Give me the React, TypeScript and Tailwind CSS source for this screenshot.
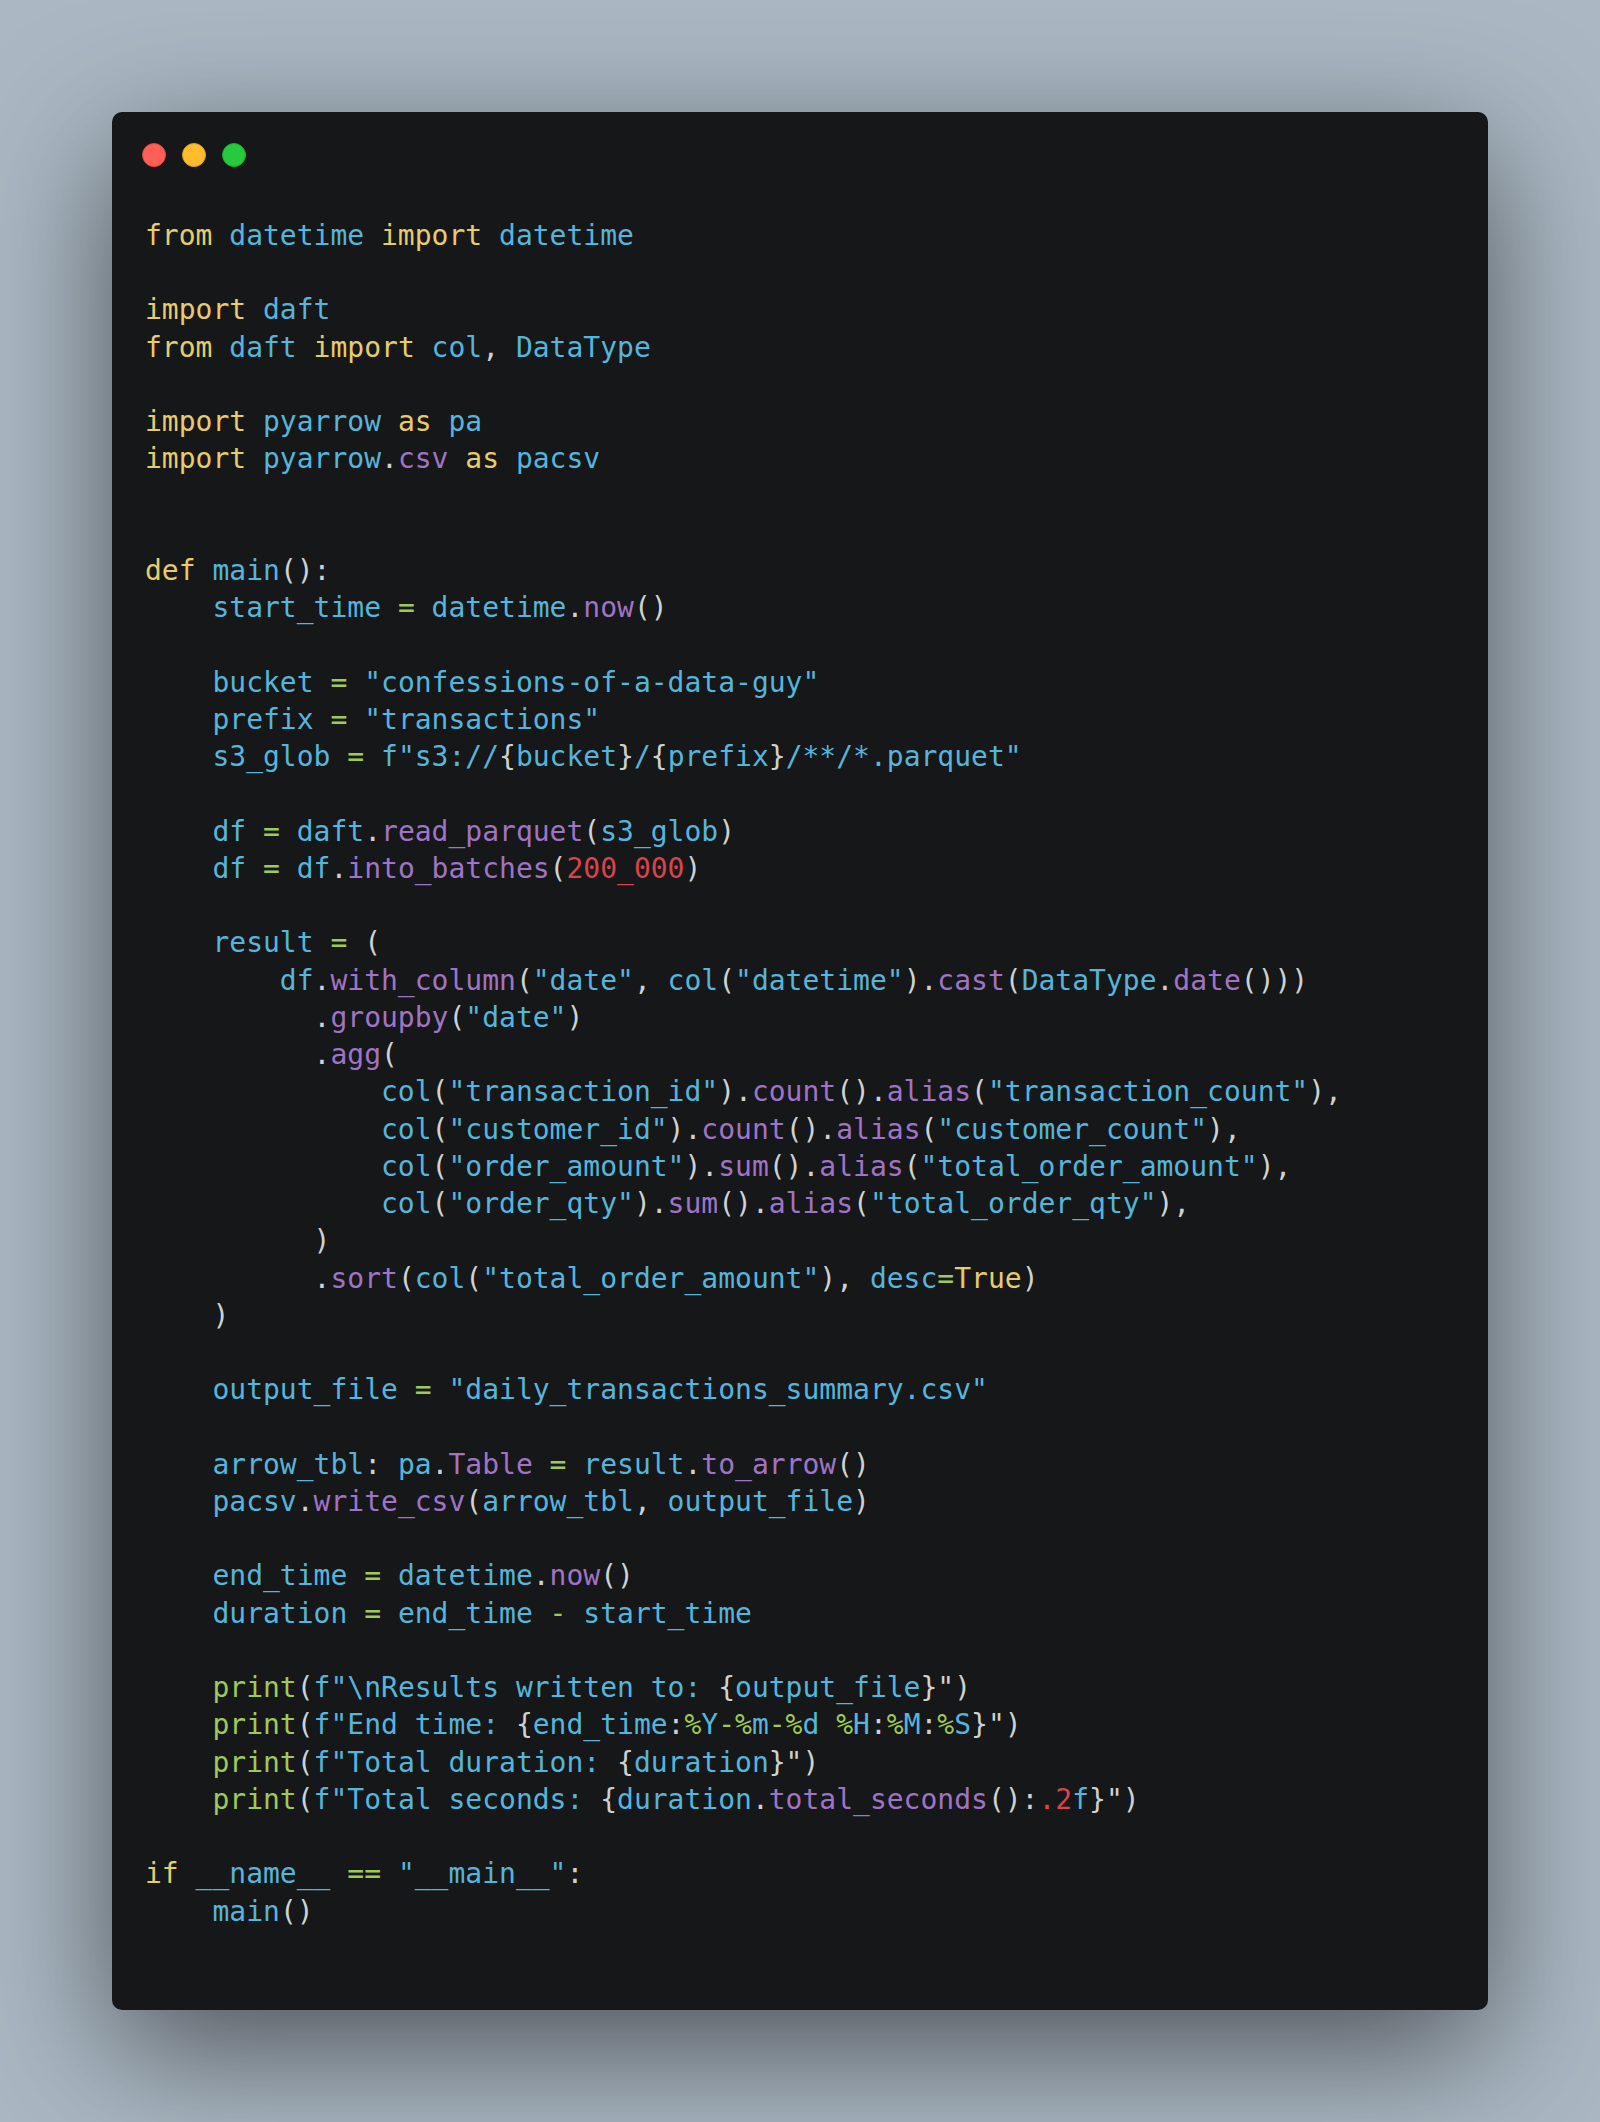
const C = {
  k: 'text-[#e6cd69]',
  v: 'text-[#55b5db]',
  p: 'text-[#a074c4]',
  o: 'text-[#9fca56]',
  n: 'text-[#d9434d]',
  t: 'text-[#cfd2d1]',
};

type Tok = [keyof typeof C, string];

// one entry per source line, blank lines are empty arrays
const lines: Tok[][] = [
  [['k', 'from'], ['t', ' '], ['v', 'datetime'], ['t', ' '], ['k', 'import'], ['t', ' '], ['v', 'datetime']],
  [],
  [['k', 'import'], ['t', ' '], ['v', 'daft']],
  [['k', 'from'], ['t', ' '], ['v', 'daft'], ['t', ' '], ['k', 'import'], ['t', ' '], ['v', 'col'], ['t', ', '], ['v', 'DataType']],
  [],
  [['k', 'import'], ['t', ' '], ['v', 'pyarrow'], ['t', ' '], ['k', 'as'], ['t', ' '], ['v', 'pa']],
  [['k', 'import'], ['t', ' '], ['v', 'pyarrow'], ['t', '.'], ['p', 'csv'], ['t', ' '], ['k', 'as'], ['t', ' '], ['v', 'pacsv']],
  [],
  [],
  [['k', 'def'], ['t', ' '], ['v', 'main'], ['t', '():']],
  [['t', '    '], ['v', 'start_time'], ['t', ' '], ['o', '='], ['t', ' '], ['v', 'datetime'], ['t', '.'], ['p', 'now'], ['t', '()']],
  [],
  [['t', '    '], ['v', 'bucket'], ['t', ' '], ['o', '='], ['t', ' '], ['v', '"confessions-of-a-data-guy"']],
  [['t', '    '], ['v', 'prefix'], ['t', ' '], ['o', '='], ['t', ' '], ['v', '"transactions"']],
  [
    ['t', '    '], ['v', 's3_glob'], ['t', ' '], ['o', '='], ['t', ' '], ['v', 'f"s3://'], ['t', '{'], ['v', 'bucket'], ['t', '}'],
    ['v', '/'], ['t', '{'], ['v', 'prefix'], ['t', '}'], ['v', '/**/*.parquet"'],
  ],
  [],
  [['t', '    '], ['v', 'df'], ['t', ' '], ['o', '='], ['t', ' '], ['v', 'daft'], ['t', '.'], ['p', 'read_parquet'], ['t', '('], ['v', 's3_glob'], ['t', ')']],
  [['t', '    '], ['v', 'df'], ['t', ' '], ['o', '='], ['t', ' '], ['v', 'df'], ['t', '.'], ['p', 'into_batches'], ['t', '('], ['n', '200_000'], ['t', ')']],
  [],
  [['t', '    '], ['v', 'result'], ['t', ' '], ['o', '='], ['t', ' (']],
  [
    ['t', '        '], ['v', 'df'], ['t', '.'], ['p', 'with_column'], ['t', '('], ['v', '"date"'], ['t', ', '], ['v', 'col'], ['t', '('],
    ['v', '"datetime"'], ['t', ').'], ['p', 'cast'], ['t', '('], ['v', 'DataType'], ['t', '.'], ['p', 'date'], ['t', '()))'],
  ],
  [['t', '          .'], ['p', 'groupby'], ['t', '('], ['v', '"date"'], ['t', ')']],
  [['t', '          .'], ['p', 'agg'], ['t', '(']],
  [['t', '              '], ['v', 'col'], ['t', '('], ['v', '"transaction_id"'], ['t', ').'], ['p', 'count'], ['t', '().'], ['p', 'alias'], ['t', '('], ['v', '"transaction_count"'], ['t', '),']],
  [['t', '              '], ['v', 'col'], ['t', '('], ['v', '"customer_id"'], ['t', ').'], ['p', 'count'], ['t', '().'], ['p', 'alias'], ['t', '('], ['v', '"customer_count"'], ['t', '),']],
  [['t', '              '], ['v', 'col'], ['t', '('], ['v', '"order_amount"'], ['t', ').'], ['p', 'sum'], ['t', '().'], ['p', 'alias'], ['t', '('], ['v', '"total_order_amount"'], ['t', '),']],
  [['t', '              '], ['v', 'col'], ['t', '('], ['v', '"order_qty"'], ['t', ').'], ['p', 'sum'], ['t', '().'], ['p', 'alias'], ['t', '('], ['v', '"total_order_qty"'], ['t', '),']],
  [['t', '          )']],
  [['t', '          .'], ['p', 'sort'], ['t', '('], ['v', 'col'], ['t', '('], ['v', '"total_order_amount"'], ['t', '), '], ['v', 'desc'], ['o', '='], ['k', 'True'], ['t', ')']],
  [['t', '    )']],
  [],
  [['t', '    '], ['v', 'output_file'], ['t', ' '], ['o', '='], ['t', ' '], ['v', '"daily_transactions_summary.csv"']],
  [],
  [
    ['t', '    '], ['v', 'arrow_tbl'], ['t', ': '], ['v', 'pa'], ['t', '.'], ['p', 'Table'], ['t', ' '], ['o', '='], ['t', ' '],
    ['v', 'result'], ['t', '.'], ['p', 'to_arrow'], ['t', '()'],
  ],
  [['t', '    '], ['v', 'pacsv'], ['t', '.'], ['p', 'write_csv'], ['t', '('], ['v', 'arrow_tbl'], ['t', ', '], ['v', 'output_file'], ['t', ')']],
  [],
  [['t', '    '], ['v', 'end_time'], ['t', ' '], ['o', '='], ['t', ' '], ['v', 'datetime'], ['t', '.'], ['p', 'now'], ['t', '()']],
  [['t', '    '], ['v', 'duration'], ['t', ' '], ['o', '='], ['t', ' '], ['v', 'end_time'], ['t', ' '], ['o', '-'], ['t', ' '], ['v', 'start_time']],
  [],
  [['t', '    '], ['o', 'print'], ['t', '('], ['v', 'f"\\nResults written to: '], ['t', '{'], ['v', 'output_file'], ['t', '}")']],
  [
    ['t', '    '], ['o', 'print'], ['t', '('], ['v', 'f"End time: '], ['t', '{'], ['v', 'end_time'], ['t', ':'],
    ['o', '%'], ['v', 'Y'], ['o', '-%'], ['v', 'm'], ['o', '-%'], ['v', 'd'], ['t', ' '], ['o', '%'], ['v', 'H'], ['t', ':'],
    ['o', '%'], ['v', 'M'], ['t', ':'], ['o', '%'], ['v', 'S'], ['t', '}")'],
  ],
  [['t', '    '], ['o', 'print'], ['t', '('], ['v', 'f"Total duration: '], ['t', '{'], ['v', 'duration'], ['t', '}")']],
  [
    ['t', '    '], ['o', 'print'], ['t', '('], ['v', 'f"Total seconds: '], ['t', '{'], ['v', 'duration'], ['t', '.'], ['p', 'total_seconds'],
    ['t', '():'], ['n', '.2'], ['v', 'f'], ['t', '}")'],
  ],
  [],
  [['k', 'if'], ['t', ' '], ['v', '__name__'], ['t', ' '], ['o', '=='], ['t', ' '], ['v', '"__main__"'], ['t', ':']],
  [['t', '    '], ['v', 'main'], ['t', '()']],
];

function Dot({ color }: { color: string }) {
  return <span className={`block w-6 h-6 rounded-full ${color}`} />;
}

export default function App() {
  return (
    <div className="min-h-[2122px] bg-[#abb8c3] px-[112px] py-[112px]">
      <div className="rounded-[10px] bg-[#151718] shadow-[0_40px_136px_rgba(0,0,0,0.55)] overflow-hidden">
        {/* window controls */}
        <div className="flex gap-4 pt-[31px] pl-[30px]">
          <Dot color="bg-[#ff5f56] border border-[#e0443e]" />
          <Dot color="bg-[#ffbd2e] border border-[#dea123]" />
          <Dot color="bg-[#27c93f] border border-[#1aab29]" />
        </div>

        <pre className="pt-[50px] pb-[80px] pl-[33px] font-['DejaVu_Sans_Mono',monospace] text-[28px] leading-[37.24px] text-[#cfd2d1]">
          {lines.map((line, i) => (
            <div key={i} className="h-[37.24px] whitespace-pre">
              {line.map(([c, s], j) => (
                <span key={j} className={C[c]}>
                  {s}
                </span>
              ))}
            </div>
          ))}
        </pre>
      </div>
    </div>
  );
}
